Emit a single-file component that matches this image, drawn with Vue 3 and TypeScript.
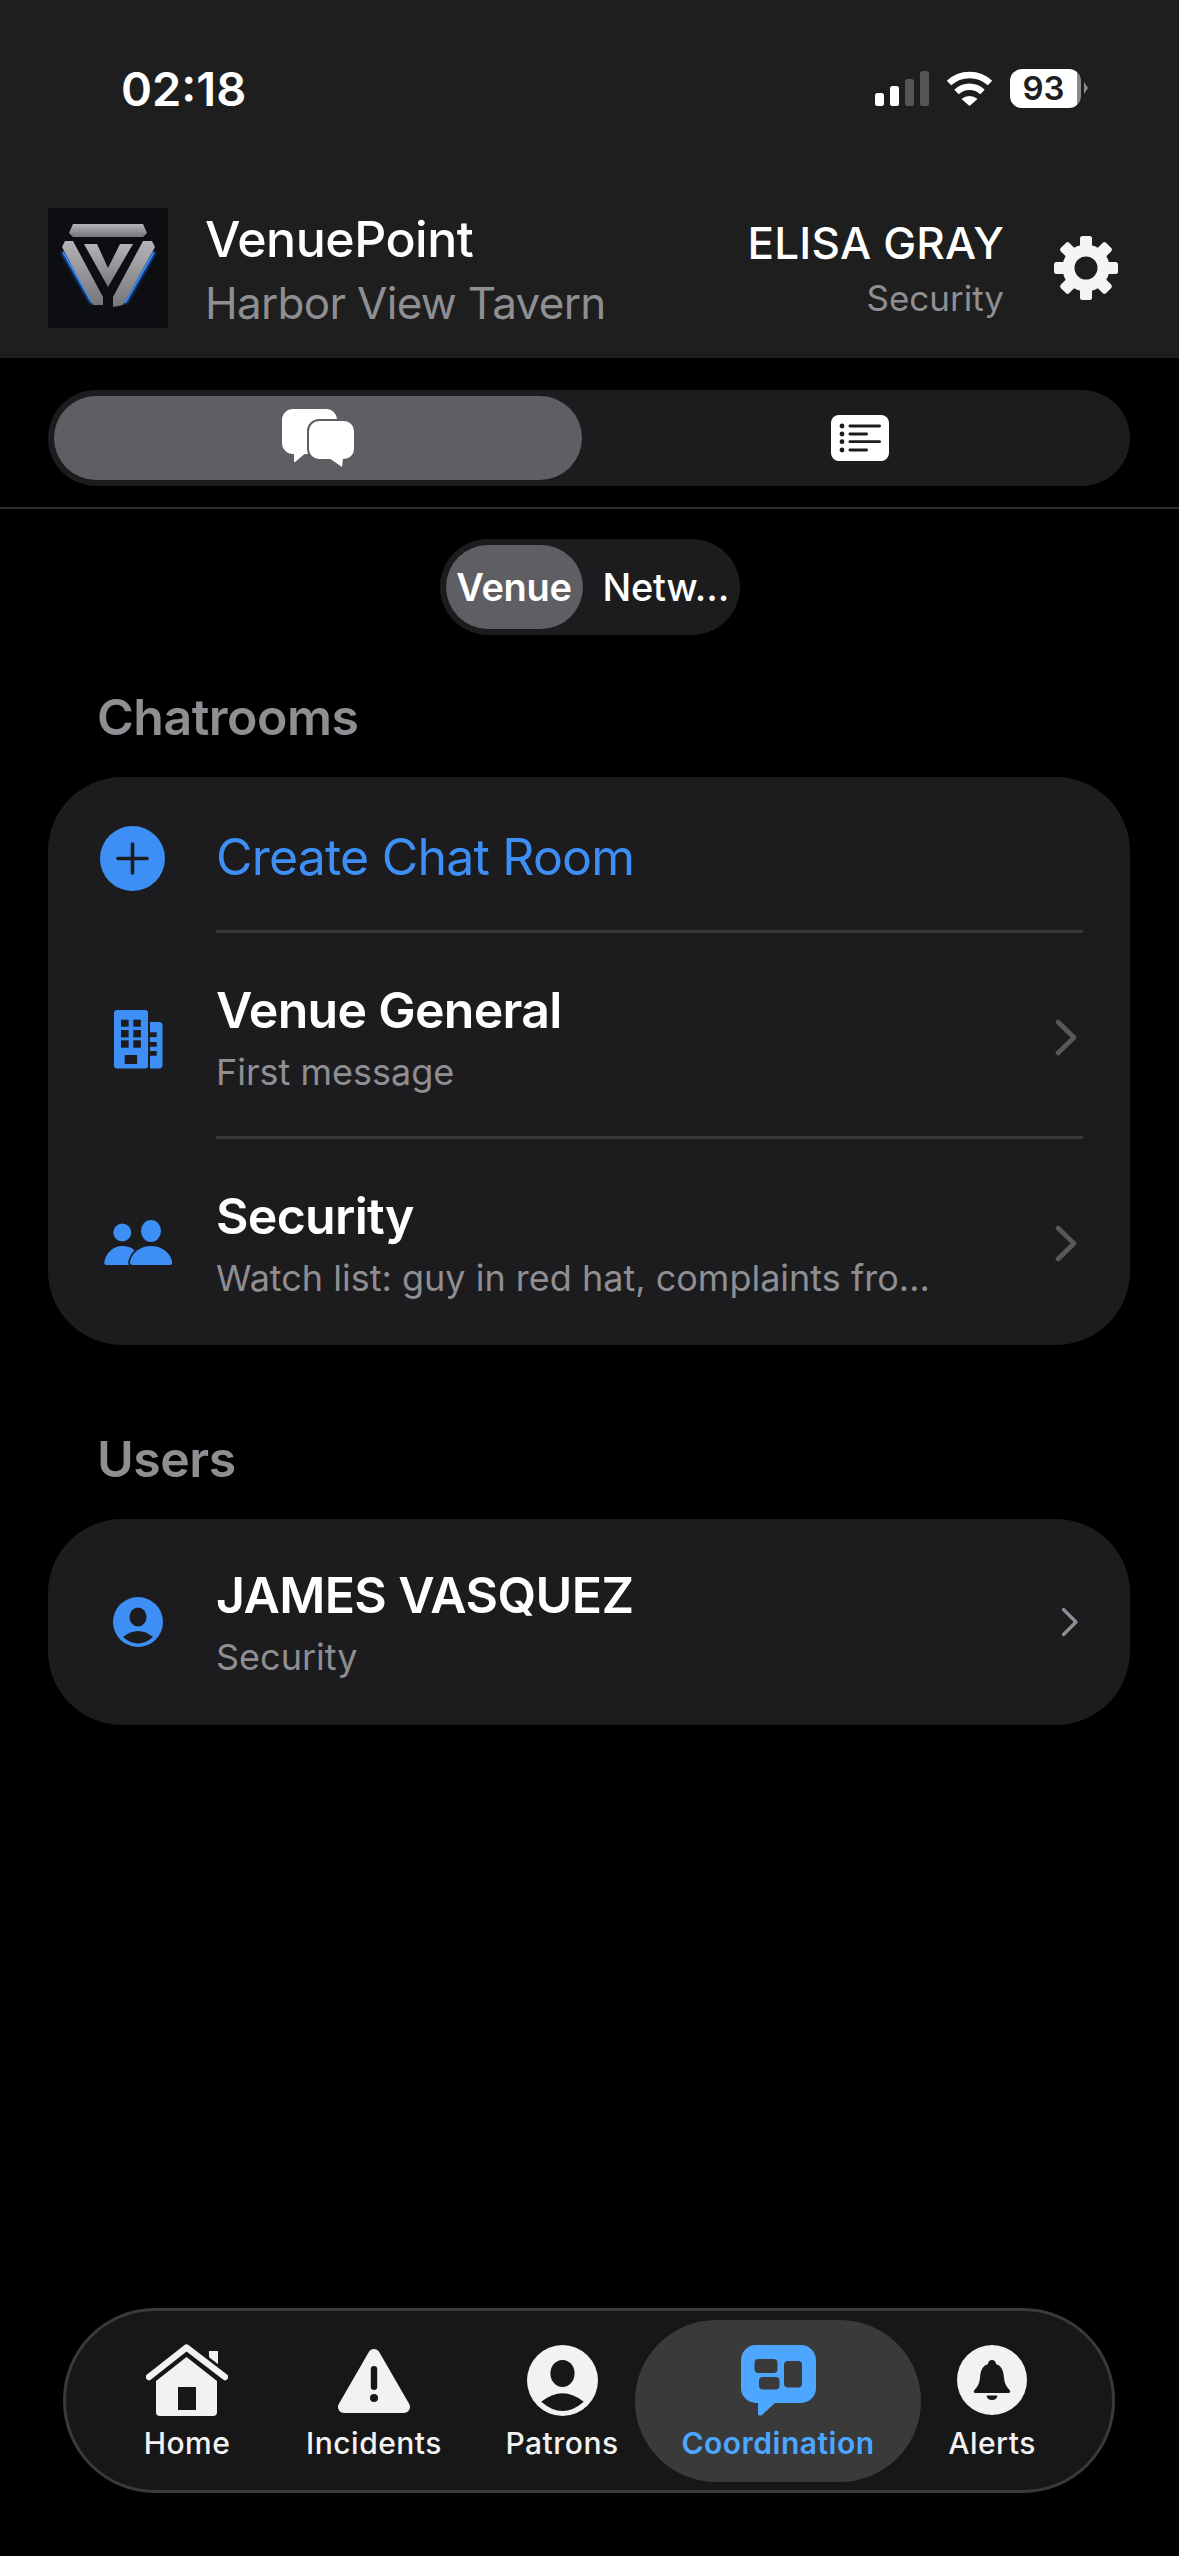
<script setup lang="ts">
// gear teeth, rotated around the middle of the 64 box
const teeth: number[] = [0, 45, 90, 135, 180, 225, 270, 315]

const signalBars = [
  { x: 0, y: 22, h: 13, on: true },
  { x: 15, y: 15, h: 20, on: true },
  { x: 30, y: 8, h: 27, on: false },
  { x: 45, y: 0, h: 35, on: false }
]
</script>

<template>
  <div class="page">
    <header class="top">
      <div class="status">
        <span class="time">02:18</span>
        <div class="status-right">
          <svg class="signal" viewBox="0 0 54 35" width="54" height="35">
            <rect
              v-for="bar in signalBars"
              :key="bar.x"
              :x="bar.x"
              :y="bar.y"
              width="9"
              :height="bar.h"
              rx="2.5"
              :fill="bar.on ? '#fff' : '#555'"
            />
          </svg>
          <svg class="wifi" viewBox="0 0 47 35" width="47" height="35">
            <path d="M3 12 A30 30 0 0 1 44 12" fill="none" stroke="#fff" stroke-width="6.5" />
            <path d="M10.5 21 A19 19 0 0 1 36.5 21" fill="none" stroke="#fff" stroke-width="6.5" />
            <path d="M15.5 28 A12 12 0 0 1 31.5 28 L23.5 35 Z" fill="#fff" />
          </svg>
          <div class="battery"><span>93</span></div>
          <div class="battery-cap"></div>
        </div>
      </div>

      <div class="brand-row">
        <svg class="logo" viewBox="0 0 120 120" width="120" height="120">
          <defs>
            <linearGradient id="metal" x1="0" y1="0" x2="0" y2="1">
              <stop offset="0" stop-color="#b4b4b7" />
              <stop offset="1" stop-color="#77777b" />
            </linearGradient>
            <filter id="glow" x="-40%" y="-20%" width="180%" height="140%">
              <feGaussianBlur stdDeviation="1.6" />
            </filter>
          </defs>
          <rect width="120" height="120" fill="#0c0e12" />
          <path d="M15 44 L44 95 M106 44 L77 95" stroke="#1f7bff" stroke-width="3" filter="url(#glow)" />
          <path d="M15 44 L44 95 M106 44 L77 95" stroke="#3c8fff" stroke-width="1.4" />
          <polygon points="25,16 95,16 99,25 95,29 25,29 21,25" fill="url(#metal)" />
          <polygon points="14,39 17,33 25,33 55,89 55,97 45,97" fill="url(#metal)" />
          <polygon points="107,39 104,33 95,33 65,89 65,99 75,97" fill="url(#metal)" />
          <polygon points="36,36 49,36 60,60 72,36 85,36 60,79" fill="url(#metal)" />
        </svg>
        <div class="brand-text">
          <div class="brand-name">VenuePoint</div>
          <div class="brand-venue">Harbor View Tavern</div>
        </div>
        <div class="who">
          <div class="who-name">ELISA GRAY</div>
          <div class="who-role">Security</div>
        </div>
        <svg class="gear" viewBox="0 0 64 64" width="64" height="64">
          <rect
            v-for="deg in teeth"
            :key="deg"
            x="26"
            y="0"
            width="12"
            height="16"
            rx="2.5"
            fill="#f5f5f5"
            :transform="`rotate(${deg} 32 32)`"
          />
          <circle cx="32" cy="32" r="17.5" fill="none" stroke="#f5f5f5" stroke-width="12" />
        </svg>
      </div>
    </header>

    <div class="main-tabs-wrap">
      <div class="main-tabs">
        <div class="main-tab main-tab-on">
          <svg viewBox="0 0 72 58" width="72" height="58">
            <rect x="0" y="0" width="55" height="45" rx="11" fill="#fff" />
            <polygon points="12,42 12,53 13,53 25,43" fill="#fff" />
            <rect x="27" y="12" width="45" height="38" rx="10" fill="#fff" stroke="#5f5e63" stroke-width="4" paint-order="stroke" />
            <polygon points="47,49 60,58 61,49" fill="#fff" />
          </svg>
        </div>
        <div class="main-tab main-tab-off">
          <svg viewBox="0 0 58 46" width="58" height="46">
            <rect width="58" height="46" rx="8" fill="#fff" />
            <g fill="#1c1c1e">
              <circle cx="11" cy="11" r="2.4" />
              <circle cx="11" cy="19" r="2.4" />
              <circle cx="11" cy="26.7" r="2.4" />
              <circle cx="11" cy="35" r="2.4" />
              <rect x="17.5" y="9.6" width="32.5" height="2.8" rx="1.4" />
              <rect x="17.5" y="17.6" width="19.5" height="2.8" rx="1.4" />
              <rect x="17.5" y="25.3" width="32.5" height="2.8" rx="1.4" />
              <rect x="17.5" y="33.6" width="19.5" height="2.8" rx="1.4" />
            </g>
          </svg>
        </div>
      </div>
    </div>

    <div class="scope-wrap">
      <div class="scope">
        <div class="scope-item scope-on">Venue</div>
        <div class="scope-item">Netw…</div>
      </div>
    </div>

    <div class="section-label">Chatrooms</div>
    <section class="card">
      <div class="row row-create row-lined">
        <div class="row-icon row-icon-plus">
          <svg viewBox="0 0 65 65" width="65" height="65">
            <circle cx="32.5" cy="32.5" r="32.5" fill="#3d8ff5" />
            <path d="M32.5 18 V47 M18 32.5 H47" stroke="#1c1c1e" stroke-width="3.6" stroke-linecap="round" />
          </svg>
        </div>
        <div class="row-body row-line">
          <div class="create-text">Create Chat Room</div>
        </div>
      </div>

      <div class="row row-lined">
        <div class="row-icon">
          <svg viewBox="0 0 49 59" width="49" height="59">
            <rect x="0" y="0" width="34" height="58.5" rx="3" fill="#3d8ff5" />
            <path d="M36 12 H45 Q48.5 12 48.5 15.5 V55 Q48.5 58.5 45 58.5 H36 Z" fill="#3d8ff5" />
            <g fill="#1c1c1e">
              <rect x="7" y="9.7" width="7.6" height="7" />
              <rect x="19.3" y="9.7" width="7.6" height="7" />
              <rect x="7" y="20" width="7.6" height="7.4" />
              <rect x="19.3" y="20" width="7.6" height="7.4" />
              <rect x="7" y="30.3" width="7.6" height="7.4" />
              <rect x="19.3" y="30.3" width="7.6" height="7.4" />
              <rect x="10.7" y="45" width="12.4" height="9" />
              <rect x="36" y="22.3" width="6.7" height="4.8" />
              <rect x="36" y="32" width="6.7" height="4.8" />
              <rect x="36" y="41" width="6.7" height="4.8" />
            </g>
          </svg>
        </div>
        <div class="row-body row-line">
          <div class="row-text">
            <div class="row-title">Venue General</div>
            <div class="row-sub">First message</div>
          </div>
          <svg class="chevron" viewBox="0 0 22 37" width="22" height="37">
            <path d="M3 3 L19 18.5 L3 34" fill="none" stroke="#58585b" stroke-width="4.6" stroke-linecap="round" stroke-linejoin="round" />
          </svg>
        </div>
      </div>

      <div class="row row-last">
        <div class="row-icon">
          <svg viewBox="0 0 68 46" width="68" height="46">
            <circle cx="18.3" cy="12.5" r="9" fill="#3d8ff5" />
            <ellipse cx="47" cy="11" rx="10" ry="11" fill="#3d8ff5" />
            <path d="M2.5 45 Q0 45 0.3 42 C2 33 9 26 18 26 C24 26 29 28 32 32 L30 45 Z" fill="#3d8ff5" />
            <path d="M28 45 Q25.5 45 26 41.5 C28 32 37 26 47 26 C57 26 66 32 68 41.5 Q68.5 45 66 45 Z" fill="#3d8ff5" stroke="#1c1c1e" stroke-width="3.4" paint-order="stroke" />
          </svg>
        </div>
        <div class="row-body">
          <div class="row-text">
            <div class="row-title">Security</div>
            <div class="row-sub">Watch list: guy in red hat, complaints fro…</div>
          </div>
          <svg class="chevron" viewBox="0 0 22 37" width="22" height="37">
            <path d="M3 3 L19 18.5 L3 34" fill="none" stroke="#58585b" stroke-width="4.6" stroke-linecap="round" stroke-linejoin="round" />
          </svg>
        </div>
      </div>
    </section>

    <div class="section-label section-users">Users</div>
    <section class="card">
      <div class="row">
        <div class="row-icon">
          <svg viewBox="0 0 50 50" width="50" height="50">
            <circle cx="25" cy="25" r="25" fill="#3d8ff5" />
            <ellipse cx="25" cy="20" rx="8.5" ry="9.5" fill="#1c1c1e" />
            <path d="M10 40 Q25 28 40 40 Q25 53 10 40 Z" fill="#1c1c1e" />
          </svg>
        </div>
        <div class="row-body">
          <div class="row-text">
            <div class="row-title row-title-caps">JAMES VASQUEZ</div>
            <div class="row-sub">Security</div>
          </div>
          <svg class="chevron chevron-user" viewBox="0 0 18 30" width="18" height="30">
            <path d="M2.5 2.5 L15 15 L2.5 27.5" fill="none" stroke="#8e8e93" stroke-width="3.2" stroke-linecap="round" stroke-linejoin="round" />
          </svg>
        </div>
      </div>
    </section>

    <nav class="nav">
      <div class="nav-item nav-home">
        <div class="nav-icon">
          <svg viewBox="0 0 82 72" width="82" height="72">
            <path d="M63 7 H72 V24 H63 Z" fill="#f2f2f2" />
            <path d="M3 33 L40.5 3.5 L79 33" fill="none" stroke="#171717" stroke-width="12" />
            <path d="M3 33 L40.5 3.5 L79 33" fill="none" stroke="#f2f2f2" stroke-width="6.4" stroke-linecap="round" stroke-linejoin="round" />
            <path d="M40.5 13 L71 37 V68 Q71 72 67 72 H14 Q10 72 10 68 V37 Z" fill="#f2f2f2" />
            <rect x="32" y="43" width="18" height="23" fill="#171717" />
          </svg>
        </div>
        <div class="nav-label">Home</div>
      </div>
      <div class="nav-item nav-incidents">
        <div class="nav-icon">
          <svg viewBox="0 0 72 65" width="72" height="65">
            <polygon points="36,7 6,59 66,59" fill="#f2f2f2" stroke="#f2f2f2" stroke-width="12" stroke-linejoin="round" />
            <rect x="32.8" y="18" width="6.4" height="24" rx="3.2" fill="#171717" />
            <circle cx="36" cy="50" r="4" fill="#171717" />
          </svg>
        </div>
        <div class="nav-label">Incidents</div>
      </div>
      <div class="nav-item nav-patrons">
        <div class="nav-icon">
          <svg viewBox="0 0 50 50" width="71" height="71">
            <circle cx="25" cy="25" r="25" fill="#f2f2f2" />
            <ellipse cx="25" cy="20" rx="8.5" ry="9.5" fill="#171717" />
            <path d="M10 40 Q25 28 40 40 Q25 53 10 40 Z" fill="#171717" />
          </svg>
        </div>
        <div class="nav-label">Patrons</div>
      </div>
      <div class="nav-item nav-coord">
        <div class="nav-icon">
          <svg viewBox="0 0 75 71" width="75" height="71">
            <rect width="75" height="58" rx="15" fill="#4da6ff" />
            <path d="M17 56 V69 Q18 72 21 70 L36 56 Z" fill="#4da6ff" />
            <g fill="#3a3a3a">
              <rect x="13.5" y="14" width="23" height="14" rx="4" />
              <rect x="18" y="32" width="20.5" height="12.5" rx="4" />
              <rect x="43" y="16" width="18" height="26.5" rx="4" />
            </g>
          </svg>
        </div>
        <div class="nav-label">Coordination</div>
      </div>
      <div class="nav-item nav-alerts">
        <div class="nav-icon">
          <svg viewBox="0 0 70 70" width="70" height="70">
            <circle cx="35" cy="35" r="35" fill="#f2f2f2" />
            <path d="M35 15 C32.5 15 31 17 31 19 C25 21 23.5 26 23 33 C22.5 38 21 41 17.5 45 C16 47 17 48 19 48 L51 48 C53 48 54 47 52.5 45 C49 41 47.5 38 47 33 C46.5 26 45 21 39 19 C39 17 37.5 15 35 15 Z" fill="#171717" />
            <path d="M29.5 50.5 H40.5 C40 53.5 38 55 35 55 C32 55 30 53.5 29.5 50.5 Z" fill="#171717" />
          </svg>
        </div>
        <div class="nav-label">Alerts</div>
      </div>
    </nav>
  </div>
</template>

<style>
html,
body {
  margin: 0;
  background: #000;
}
</style>

<style scoped>
.page {
  width: 1179px;
  height: 2556px;
  display: flex;
  flex-direction: column;
  background: #000;
  color: #fff;
  font-family: Inter, "Liberation Sans", sans-serif;
  overflow: hidden;
}

.top {
  background: #1e1e1e;
  height: 358px;
}

.status {
  height: 176px;
  display: flex;
  align-items: center;
  justify-content: space-between;
  padding: 0 91px 0 121px;
}

.time {
  font-size: 47px;
  font-weight: 600;
}

.status-right {
  display: flex;
  align-items: center;
}

.wifi {
  margin-left: 17px;
}

.battery {
  margin-left: 17px;
  width: 71px;
  height: 39px;
  border-radius: 12px;
  background: linear-gradient(90deg, #fff 94%, #8a8a8a 94%);
  color: #1e1e1e;
  font-size: 33px;
  font-weight: 600;
  display: flex;
  align-items: center;
  justify-content: center;
  padding-right: 4px;
  box-sizing: border-box;
}

.battery-cap {
  margin-left: 3px;
  width: 0;
  height: 0;
  border-top: 6px solid transparent;
  border-bottom: 6px solid transparent;
  border-left: 4px solid #8a8a8a;
}

.brand-row {
  height: 182px;
  box-sizing: border-box;
  display: flex;
  align-items: center;
  padding: 32px 61px 30px 48px;
}

.logo {
  flex: none;
}

.brand-text {
  margin-left: 37px;
  padding-top: 4px;
  flex: 1;
}

.brand-name {
  font-size: 50px;
  font-weight: 500;
  line-height: 60px;
  letter-spacing: -0.5px;
}

.brand-venue {
  margin-top: 5px;
  font-size: 44px;
  line-height: 58px;
  letter-spacing: -0.7px;
  color: #8e8e93;
}

.who {
  text-align: right;
  margin-right: 50px;
  padding-top: 3px;
}

.who-name {
  font-size: 44px;
  font-weight: 500;
  line-height: 54px;
  letter-spacing: 0.2px;
}

.who-role {
  margin-top: 3px;
  font-size: 35px;
  line-height: 50px;
  color: #8e8e93;
}

.gear {
  flex: none;
}

.main-tabs-wrap {
  padding: 32px 49px 21px 48px;
  border-bottom: 2px solid #2c2c2e;
}

.main-tabs {
  height: 96px;
  padding: 6px;
  box-sizing: border-box;
  display: flex;
  background: #1c1c1e;
  border-radius: 48px;
}

.main-tab {
  display: flex;
  align-items: center;
  justify-content: center;
  border-radius: 42px;
}

.main-tab-on {
  flex: none;
  width: 528px;
  background: #5f5e63;
}

.main-tab-off {
  flex: 1;
  padding-left: 14px;
}

.scope-wrap {
  display: flex;
  justify-content: center;
  padding-top: 30px;
}

.scope {
  height: 96px;
  width: 300px;
  padding: 6px;
  box-sizing: border-box;
  display: flex;
  background: #1c1c1e;
  border-radius: 48px;
}

.scope-item {
  display: flex;
  align-items: center;
  justify-content: center;
  font-size: 38px;
  font-weight: 500;
  letter-spacing: -0.3px;
  padding-left: 20px;
}

.scope-on {
  width: 137px;
  padding-left: 0;
  flex: none;
  background: #5f5e63;
  border-radius: 42px;
  font-weight: 600;
}

.section-label {
  margin: 52px 0 30px 97px;
  font-size: 50px;
  line-height: 60px;
  font-weight: 600;
  letter-spacing: -0.5px;
  color: #8e8e93;
}

.section-users {
  margin-top: 84px;
  margin-bottom: 30px;
}

.card {
  margin: 0 49px 0 48px;
  background: #1c1c1e;
  border-radius: 74px;
}

.row {
  display: flex;
  height: 206px;
  box-sizing: border-box;
}

.row-create {
  height: 156px;
}

.row-last {
  padding-top: 2px;
}

.row-icon {
  flex: none;
  width: 168px;
  padding-left: 12px;
  box-sizing: border-box;
  display: flex;
  align-items: center;
  justify-content: center;
}

.row-icon-plus {
  padding-left: 0;
}

.row-lined .row-icon {
  padding-top: 6px;
}

.row-body {
  flex: 1;
  display: flex;
  align-items: center;
  justify-content: space-between;
  margin-right: 47px;
  padding-right: 6px;
  box-sizing: border-box;
}

.row-line {
  padding-top: 6px;
  border-bottom: 3px solid #38383a;
}

.create-text {
  font-size: 50px;
  letter-spacing: -0.8px;
  color: #3d8ff5;
}

.row-title {
  font-size: 50px;
  font-weight: 600;
  line-height: 60px;
  letter-spacing: -0.7px;
}

.row-title-caps {
  letter-spacing: -0.6px;
}

.row-sub {
  font-size: 36px;
  line-height: 46px;
  margin-top: 9px;
  color: #8e8e93;
}

.chevron-user {
  margin-right: -2px;
}

.nav {
  margin: auto 64px 63px 63px;
  height: 185px;
  box-sizing: border-box;
  border: 3px solid #3a3a3a;
  border-radius: 92px;
  background: #171717;
  display: flex;
  padding-top: 9px;
}

.nav-item {
  height: 162px;
  padding-top: 24px;
  box-sizing: border-box;
  display: flex;
  flex-direction: column;
  align-items: center;
}

.nav-home {
  width: 160px;
  margin-left: 41px;
}

.nav-incidents {
  width: 160px;
  margin-left: 27px;
}

.nav-patrons {
  width: 140px;
  margin-left: 38px;
}

.nav-coord {
  width: 286px;
  margin-left: 3px;
  background: #3a3a3a;
  border-radius: 81px;
}

.nav-alerts {
  width: 120px;
  margin-left: 11px;
}

.nav-icon {
  height: 72px;
  display: flex;
  align-items: center;
  justify-content: center;
}

.nav-label {
  margin-top: 9px;
  font-size: 30px;
  line-height: 36px;
  font-weight: 500;
  letter-spacing: 0.5px;
  color: #f2f2f2;
}

.nav-coord .nav-label {
  font-weight: 600;
  color: #4da6ff;
}
</style>
